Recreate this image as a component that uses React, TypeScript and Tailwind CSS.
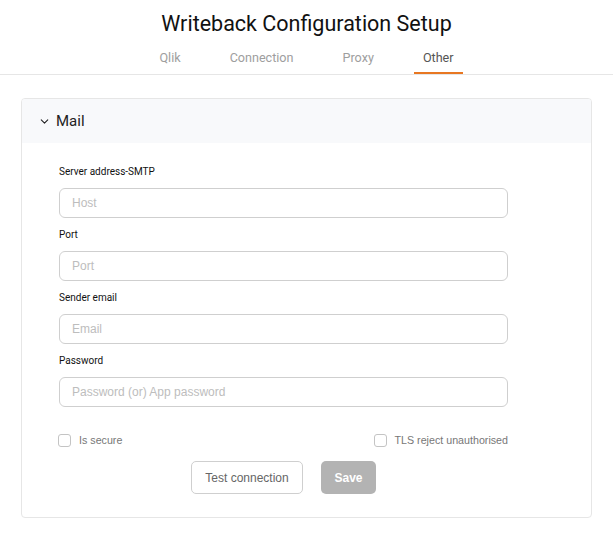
import { ChevronDown } from "lucide-react"

const tabs = ["Qlik", "Connection", "Proxy", "Other"]

const fields = [
  { label: "Server address-SMTP", placeholder: "Host" },
  { label: "Port", placeholder: "Port" },
  { label: "Sender email", placeholder: "Email" },
  { label: "Password", placeholder: "Password (or) App password" },
]

function Check({ label }: { label: string }) {
  return (
    <label className="flex items-center gap-[8px] font-['Liberation_Sans',Arial,sans-serif] text-[10.7px] leading-[13px] text-[#777]">
      <span className="h-[13px] w-[13px] rounded-[3px] border border-[#c4c4c4] bg-white" />
      {label}
    </label>
  )
}

export default function App() {
  return (
    <div className="min-h-[533px] bg-white font-['Roboto',sans-serif]">
      <div className="border-b border-[#e6e6e6]">
        <h1 className="pt-[11px] text-center text-[21.5px] leading-[26px] text-[#111]">
          Writeback Configuration Setup
        </h1>
        <div className="mt-[13px] flex justify-center gap-[31px]">
          {tabs.map((t) => (
            <div
              key={t}
              className={
                t === "Other"
                  ? "border-b-2 border-[#e87722] px-[9px] pb-[7px] text-[12.6px] leading-[15px] text-[#555]"
                  : "border-b-2 border-transparent px-[9px] pb-[7px] text-[12.6px] leading-[15px] text-[#9e9e9e]"
              }
            >
              {t}
            </div>
          ))}
        </div>
      </div>

      <div className="mx-[21px] mt-[23px] overflow-hidden rounded-[4px] border border-[#e6e6e6]">
        <div className="flex h-[44px] items-center gap-[5px] bg-[#f8f9fb] pl-[16px]">
          <ChevronDown size={13} strokeWidth={2} className="text-[#222]" />
          <span className="text-[15px] text-[#222]">Mail</span>
        </div>

        <div className="w-[486px] pb-[23px] pl-[37px] pt-[23px]">
          {fields.map((f) => (
            <div key={f.label} className="mb-[11px]">
              <div className="mb-[10px] text-[10px] leading-[12px] text-[#111]">
                {f.label}
              </div>
              <input
                placeholder={f.placeholder}
                className="h-[30px] w-full rounded-[6px] border border-[#cfcfcf] px-[12px] font-['Liberation_Sans',Arial,sans-serif] text-[12px] text-[#333] outline-none placeholder:text-[#bdbdbd]"
              />
            </div>
          ))}

          <div className="-ml-[1px] mt-[27px] flex items-center justify-between">
            <Check label="Is secure" />
            <Check label="TLS reject unauthorised" />
          </div>

          <div className="mt-[14px] flex justify-center gap-[18px] font-['Liberation_Sans',Arial,sans-serif]">
            <button className="h-[33px] w-[112px] rounded-[5px] border border-[#cfcfcf] bg-white text-[12px] text-[#666]">
              Test connection
            </button>
            <button className="h-[33px] w-[55px] rounded-[5px] bg-[#b3b3b3] text-[12px] font-bold text-white">
              Save
            </button>
          </div>
        </div>
      </div>
    </div>
  )
}
